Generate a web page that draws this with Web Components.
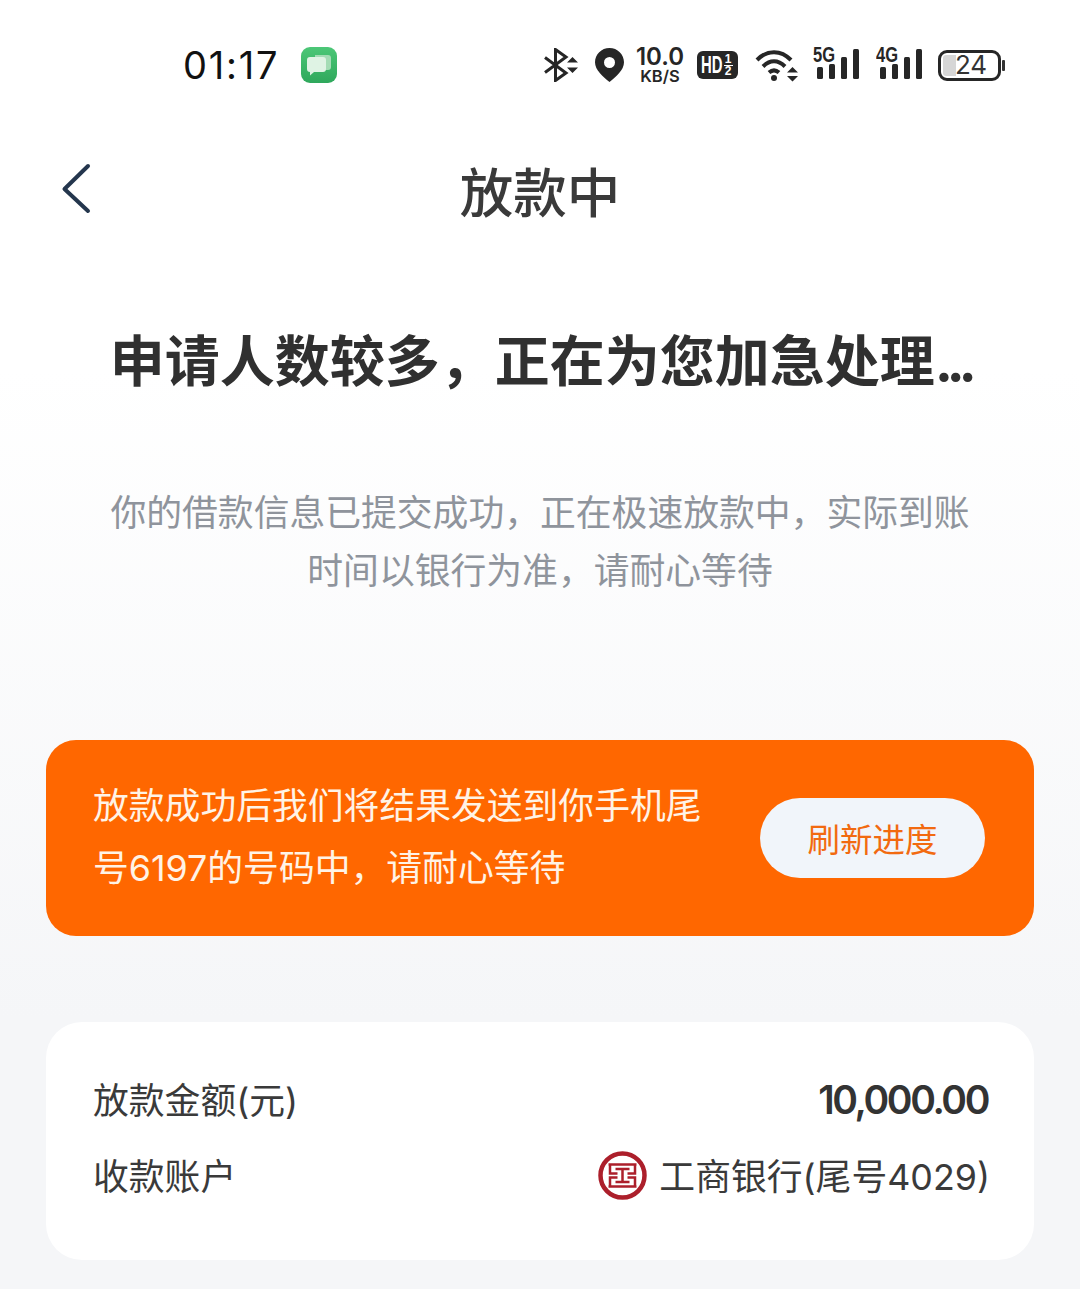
<!DOCTYPE html>
<html lang="zh">
<head>
<meta charset="utf-8">
<title>放款中</title>
<style>
	html, body {
		margin: 0;
		height: 1289px;
		overflow: hidden;
	}

	body {
		font-family: Inter, "Noto Sans CJK SC", "Noto Sans", sans-serif;
		background: linear-gradient(#fff 0, #fff 370px, #f5f6f8 1020px, #f5f6f8 100%);
		color: #333;
	}
</style>
</head>
<body>
<status-bar></status-bar>
<nav-bar>放款中</nav-bar>
<hero-text>
	<span slot="title">申请人数较多，正在为您加急处理<span style="letter-spacing:-6.500px">...</span></span>
	你的借款信息已提交成功，正在极速放款中，实际到账<br>时间以银行为准，请耐心等待
</hero-text>
<notice-card action="刷新进度">放款成功后我们将结果发送到你手机尾<br>号6197的号码中，请耐心等待</notice-card>
<info-card>
	<info-row label="放款金额(元)"><b>10,000.00</b></info-row>
	<info-row label="收款账户"><bank-logo></bank-logo>工商银行(尾号4029)</info-row>
</info-card>

<script>
const html = x => x.raw[0];

const statusTemplate = document.createElement("template");
statusTemplate.innerHTML = html`
	<style>
		:host {
			display: flex;
			justify-content: space-between;
			align-items: center;
			height: 130px;
			padding: 0 75px 0 183px;
			box-sizing: border-box;
			color: #262626;
		}

		.left, .right {
			display: flex;
			align-items: center;
		}

		.time {
			font: 400 38px/1 Inter, "Noto Sans", sans-serif;
			letter-spacing: 1.800px;
			color: #111;
			width: 118px;
		}

		svg {
			display: block;
			flex: none;
		}

		.speed {
			display: flex;
			flex-direction: column;
			align-items: center;
			width: 48px;
			margin-left: 12px;
			font-family: Inter, "Noto Sans", sans-serif;
			line-height: 1;
		}

		.speed .num {
			font-size: 24px;
			font-weight: 600;
			height: 22px;
			line-height: 20px;
		}

		.speed .unit {
			font-size: 16.500px;
			font-weight: 600;
			height: 14px;
			line-height: 14px;
		}

		.hd {
			display: flex;
			align-items: center;
			width: 41px;
			height: 28px;
			box-sizing: border-box;
			margin-left: 13px;
			padding-left: 4px;
			border-radius: 6px;
			background: #262626;
			color: #fff;
			font: 700 24px/1 "Liberation Sans", sans-serif;
		}

		.hd .name {
			display: block;
			width: 22px;
			transform: scaleX(0.62);
			transform-origin: left center;
		}

		.hd .frac {
			display: flex;
			flex-direction: column;
			align-items: center;
			width: 10px;
			font-size: 12px;
			line-height: 11px;
		}

		.hd .frac i {
			display: block;
			width: 9px;
			height: 1px;
			background: #fff;
		}

		.signal {
			position: relative;
			width: 47px;
			height: 34px;
			flex: none;
		}

		.signal span {
			position: absolute;
			left: 0;
			top: -2px;
			width: 22px;
			font: 700 22px/18px "Liberation Sans", sans-serif;
			white-space: nowrap;
			transform: scaleX(0.75);
			transform-origin: left center;
		}

		.signal svg {
			position: absolute;
			left: 3px;
			top: -1px;
		}

		.battery {
			position: relative;
			display: flex;
			align-items: center;
			width: 63px;
			height: 31px;
			box-sizing: border-box;
			margin-left: 15px;
			border: 3px solid #262626;
			border-radius: 9px;
			padding-left: 2px;
			font: 400 26px/1 Inter, "Noto Sans", sans-serif;
			color: #333;
		}

		.battery i {
			display: block;
			width: 13px;
			height: 21px;
			background: #d6d6d6;
			border-radius: 3px 0 0 3px;
		}

		.battery span {
			width: 27px;
			margin-left: -1px;
			letter-spacing: -0.3px;
		}

		.tip {
			width: 3px;
			height: 11px;
			margin-left: 1px;
			border-radius: 1px;
			background: #333;
		}
	</style>
	<div class="left">
		<span class="time">01:17</span>
		<svg width="36" height="36" viewBox="0 0 36 36">
			<defs>
				<linearGradient id="app" x1="0" y1="0" x2="0" y2="1">
					<stop offset="0" stop-color="#4cc777"/>
					<stop offset="1" stop-color="#2fa85c"/>
				</linearGradient>
			</defs>
			<rect width="36" height="36" rx="9" fill="url(#app)"/>
			<path d="M14 8h13a3 3 0 0 1 3 3v9a3 3 0 0 1-3 3H14z" fill="#a4dcb5"/>
			<path d="M9 10h13a3 3 0 0 1 3 3v9a3 3 0 0 1-3 3H13l-4 3.500V25a3 3 0 0 1-3-3v-9a3 3 0 0 1 3-3z" fill="#dff3e4"/>
		</svg>
	</div>
	<div class="right">
		<svg width="35" height="34" viewBox="0 0 35 34" fill="none" stroke="#262626" stroke-width="3">
			<path d="M2 9.500 23 25 12.500 32.500V1.500L23 9 2 24.500"/>
			<path d="M24 14.500 29.500 9 35 14.500zM24 19.500 29.500 25 35 19.500z" fill="#262626" stroke="none"/>
		</svg>
		<svg style="margin-left:17px" width="29" height="34" viewBox="0 0 29 34">
			<path fill="#262626" fill-rule="evenodd" d="M14.500 0C6.500 0 0 6.300 0 14.300 0 22 8 29 14.500 34 21 29 29 22 29 14.300 29 6.300 22.500 0 14.500 0zm0 9a5.500 5.500 0 1 1 0 11 5.500 5.500 0 0 1 0-11z"/>
		</svg>
		<div class="speed"><span class="num">10.0</span><span class="unit">KB/S</span></div>
		<div class="hd"><span class="name">HD</span><span class="frac">1<i></i>2</span></div>
		<svg style="margin-left:17px" width="45" height="34" viewBox="0 0 45 34" fill="none" stroke="#262626" stroke-width="4">
			<path d="M2 12C12 1.500 26 1.500 36 12M8 18.500c7-7 15-7 22 0M14 24.500c3.500-3 6.500-3 10 0"/>
			<circle cx="19" cy="30" r="3" fill="#262626" stroke="none"/>
			<path d="M32 24.500 37.500 19 43 24.500zM32 28 37.500 33.500 43 28z" fill="#262626" stroke="none"/>
		</svg>
		<div class="signal" style="margin-left:13px">
			<span>5G</span>
			<svg width="44" height="33" viewBox="0 0 44 33" fill="#262626">
				<rect x="1" y="20" width="6" height="12" rx="1.500"/><rect x="13" y="17" width="6" height="15" rx="1.500"/><rect x="25" y="10" width="6" height="22" rx="1.500"/><rect x="37" y="2" width="6" height="30" rx="1.500"/>
			</svg>
		</div>
		<div class="signal" style="margin-left:16px">
			<span>4G</span>
			<svg width="44" height="33" viewBox="0 0 44 33" fill="#262626">
				<rect x="1" y="20" width="6" height="12" rx="1.500"/><rect x="13" y="17" width="6" height="15" rx="1.500"/><rect x="25" y="10" width="6" height="22" rx="1.500"/><rect x="37" y="2" width="6" height="30" rx="1.500"/>
			</svg>
		</div>
		<div class="battery"><i></i><span>24</span></div>
		<div class="tip"></div>
	</div>
`;

class StatusBar extends HTMLElement {
	constructor() {
		super();
		this.attachShadow({mode: "open"}).appendChild(statusTemplate.content.cloneNode(true));
	}
}

const navTemplate = document.createElement("template");
navTemplate.innerHTML = html`
	<style>
		:host {
			display: flex;
			align-items: center;
			justify-content: center;
			position: relative;
			height: 118px;
			padding-bottom: 6px;
			font-size: 53.500px;
			font-weight: 500;
			color: #3a3a3a;
		}

		svg {
			position: absolute;
			left: 60px;
			top: 31px;
		}
	</style>
	<svg width="32" height="54" viewBox="0 0 32 54" fill="none" stroke="#24364d" stroke-width="4" stroke-linecap="round" stroke-linejoin="round">
		<path d="M28 5 4.500 28 28 50"/>
	</svg>
	<slot></slot>
`;

class NavBar extends HTMLElement {
	constructor() {
		super();
		this.attachShadow({mode: "open"}).appendChild(navTemplate.content.cloneNode(true));
	}
}

const heroTemplate = document.createElement("template");
heroTemplate.innerHTML = html`
	<style>
		:host {
			display: block;
			text-align: center;
			height: 486px;
		}

		.title {
			padding-top: 68px;
			font-size: 55px;
			font-weight: 700;
			line-height: 78px;
			color: #303030;
			white-space: nowrap;
		}

		.text {
			margin-top: 84px;
			font-size: 35.800px;
			line-height: 58px;
			color: #8f949c;
		}
	</style>
	<div class="title"><slot name="title"></slot></div>
	<div class="text"><slot></slot></div>
`;

class HeroText extends HTMLElement {
	constructor() {
		super();
		this.attachShadow({mode: "open"}).appendChild(heroTemplate.content.cloneNode(true));
	}
}

const noticeTemplate = document.createElement("template");
noticeTemplate.innerHTML = html`
	<style>
		:host {
			display: flex;
			align-items: center;
			justify-content: space-between;
			height: 196px;
			margin: 0 46px;
			padding: 0 49px 0 47px;
			box-sizing: border-box;
			border-radius: 30px;
			background: #ff6700;
			color: #fff3e6;
			font-size: 35.800px;
			line-height: 62px;
		}

		.text {
			margin-bottom: 2px;
		}

		button {
			flex: none;
			width: 225px;
			height: 80px;
			padding: 6px 0 0;
			border: 0;
			border-radius: 40px;
			background: #f1f5fa;
			color: #f26a10;
			font: inherit;
			font-size: 32.500px;
			line-height: 74px;
		}
	</style>
	<div class="text"><slot></slot></div>
	<button></button>
`;

class NoticeCard extends HTMLElement {
	constructor() {
		super();
		const shadow = this.attachShadow({mode: "open"});
		shadow.appendChild(noticeTemplate.content.cloneNode(true));
		shadow.querySelector("button").textContent = this.getAttribute("action");
	}
}

const cardTemplate = document.createElement("template");
cardTemplate.innerHTML = html`
	<style>
		:host {
			display: flex;
			flex-direction: column;
			height: 238px;
			margin: 86px 46px 0;
			padding: 38px 46px 0 47px;
			box-sizing: border-box;
			border-radius: 36px;
			background: #fff;
		}
	</style>
	<slot></slot>
`;

class InfoCard extends HTMLElement {
	constructor() {
		super();
		this.attachShadow({mode: "open"}).appendChild(cardTemplate.content.cloneNode(true));
	}
}

const rowTemplate = document.createElement("template");
rowTemplate.innerHTML = html`
	<style>
		:host {
			display: flex;
			align-items: center;
			justify-content: space-between;
			height: 76px;
			font-size: 35.800px;
			color: #3a3a3a;
		}

		.value {
			display: flex;
			align-items: center;
			gap: 12px;
			margin-right: -2px;
		}

		::slotted(b) {
			margin: 3px 2px 0 0;
			font-size: 39px;
			font-weight: 600;
			letter-spacing: -2.400px;
			color: #333;
		}
	</style>
	<span class="label"></span>
	<span class="value"><slot></slot></span>
`;

class InfoRow extends HTMLElement {
	constructor() {
		super();
		const shadow = this.attachShadow({mode: "open"});
		shadow.appendChild(rowTemplate.content.cloneNode(true));
		shadow.querySelector(".label").textContent = this.getAttribute("label");
	}
}

const logoTemplate = document.createElement("template");
logoTemplate.innerHTML = html`
	<style>
		:host {
			display: block;
			width: 49px;
			height: 49px;
			margin-top: 3px;
			flex: none;
		}
	</style>
	<svg width="49" height="49" viewBox="0 0 49 49" fill="none" stroke="#ac1f2b">
		<circle cx="24.500" cy="24.500" r="22" stroke-width="4.500"/>
		<path stroke-width="2.500" d="M10.500 13.500h28M12 13.500v9h7.500M37 13.500v9h-7.500M10.500 35.500h28M12 35.500v-9h7.500M37 35.500v-9h-7.500M17.500 18h14M24.500 18v13M17.500 31h14"/>
	</svg>
`;

class BankLogo extends HTMLElement {
	constructor() {
		super();
		this.attachShadow({mode: "open"}).appendChild(logoTemplate.content.cloneNode(true));
	}
}

customElements.define("status-bar", StatusBar);
customElements.define("nav-bar", NavBar);
customElements.define("hero-text", HeroText);
customElements.define("notice-card", NoticeCard);
customElements.define("info-card", InfoCard);
customElements.define("info-row", InfoRow);
customElements.define("bank-logo", BankLogo);
</script>
</body>
</html>
